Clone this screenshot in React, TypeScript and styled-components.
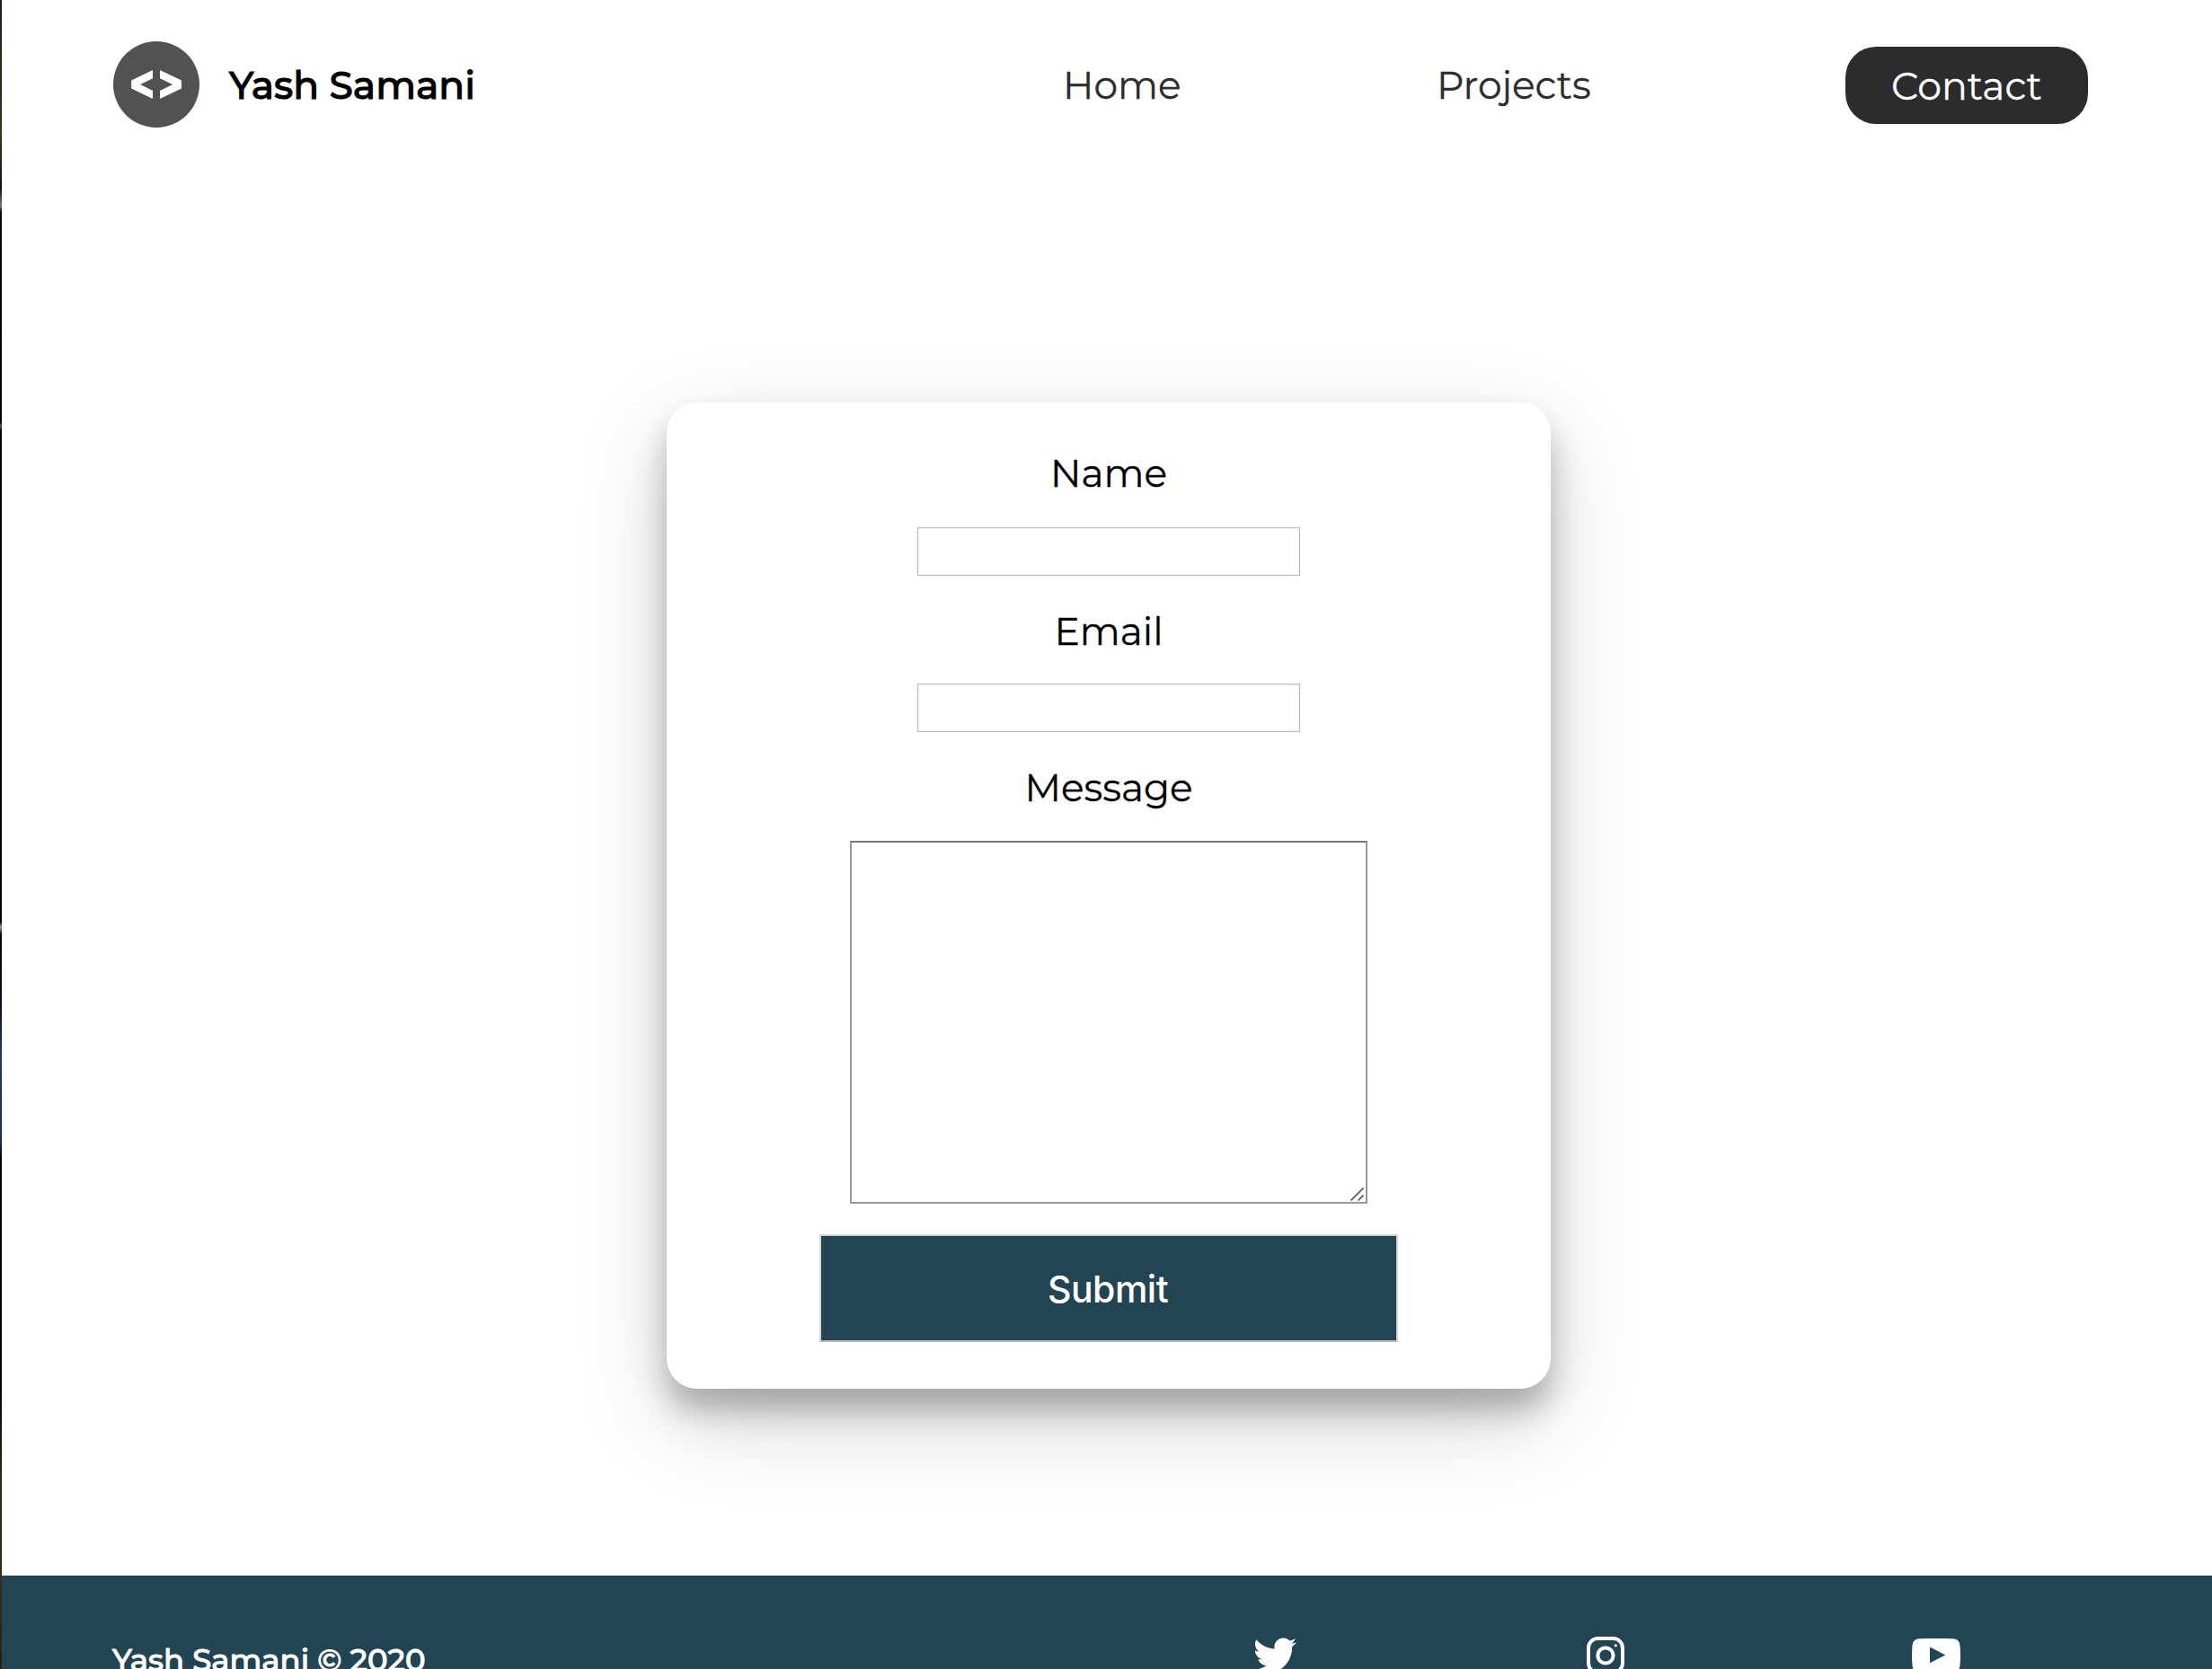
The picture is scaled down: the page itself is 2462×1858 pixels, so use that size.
import React from "react";
import styled, { createGlobalStyle } from "styled-components";
import { FaTwitter } from "react-icons/fa";

const GlobalStyle = createGlobalStyle`
  * { box-sizing: border-box; }
  body {
    margin: 0;
    background: #fff;
    font-family: Montserrat, Inter, "Liberation Sans", sans-serif;
    overflow: hidden;
  }
`;

const Window = styled.div`
  display: flex;
  height: 1858px;
  overflow: hidden;
`;

const DesktopEdge = styled.div`
  flex: 0 0 2px;
  background: linear-gradient(
    #1b2013 0, #30361f 150px, #10140c 210px, #777 229px, #080a08 236px,
    #000 470px, #555 474px, #000 480px, #000 1026px, #999 1032px, #05070a 1040px,
    #0a1020 1120px, #24365f 1170px, #1c2c52 1270px, #000 1290px,
    #060403 1540px, #33230f 1640px, #3a2a18 1760px, #2c1e0f 1858px
  );
`;

const Page = styled.div`
  flex: 1;
  min-width: 0;
  display: flex;
  flex-direction: column;
`;

const Header = styled.header`
  display: flex;
  flex-shrink: 0;
  align-items: center;
  height: 190px;
  padding: 0 138px 0 124px;
`;

const Brand = styled.a`
  display: flex;
  align-items: center;
  gap: 33px;
  margin-right: auto;
`;

const Word = styled.span<{ $size?: number; $track?: number; $weight?: number; $color?: string; $stroke?: number }>`
  font-size: ${(p) => p.$size ?? 42.4}px;
  line-height: 52px;
  letter-spacing: ${(p) => p.$track ?? 0}px;
  font-weight: ${(p) => p.$weight ?? 400};
  color: ${(p) => p.$color ?? "#000"};
  -webkit-text-stroke: ${(p) => p.$stroke ?? 0.3}px currentColor;
  white-space: nowrap;
`;

const Nav = styled.nav`
  display: flex;
  align-items: center;
`;

const NavLink = styled.a<{ $width: number }>`
  display: flex;
  width: ${(p) => p.$width}px;
`;

const ContactLink = styled.a`
  display: flex;
  align-items: center;
  justify-content: center;
  width: 270px;
  height: 86px;
  padding-top: 1px;
  border-radius: 34px;
  background: #2c2c2c;
`;

const Main = styled.main`
  flex: 0 0 1564px;
  padding: 258px 0 0 740px;
`;

const Card = styled.form`
  display: flex;
  flex-direction: column;
  align-items: center;
  width: 984px;
  height: 1098px;
  padding-top: 53px;
  border-radius: 34px;
  background: #fff;
  box-shadow: 0 24px 32px rgba(0, 0, 0, 0.24), 0 34px 100px rgba(0, 0, 0, 0.19);
`;

const Field = styled.label<{ $height: number; $gap: number }>`
  display: flex;
  flex-direction: column;
  align-items: center;
  justify-content: flex-start;
  gap: ${(p) => p.$gap}px;
  height: ${(p) => p.$height}px;
`;

const TextInput = styled.input`
  width: 426px;
  height: 54px;
  padding: 2px;
  border: 1px solid #bbb;
  box-shadow: inset 0 0 0 1px #f1f1f1;
  background: transparent;
  outline: none;
`;

const MessageBox = styled.div`
  display: flex;
  align-items: flex-end;
  justify-content: flex-end;
  width: 576px;
  height: 404px;
  padding: 0 2px 1px 0;
  border: 2px solid #999;
  border-top-color: #757575;
`;

const SubmitButton = styled.button`
  display: flex;
  align-items: center;
  justify-content: center;
  width: 644px;
  height: 120px;
  padding: 1px 2px 0 0;
  border: 2px solid #d3d3d3;
  border-bottom-color: #b9b9b9;
  background: #234453;
  font-family: Inter, "Liberation Sans", sans-serif;
`;

const Footer = styled.footer`
  display: flex;
  flex: 0 0 184px;
  padding: 0 124px 0 123px;
  background: #234453;
  color: #fff;
`;

const Copyright = styled.div`
  width: 1270px;
  padding-top: 68px;
`;

const Social = styled.div`
  display: flex;
  align-items: center;
  height: 48px;
  margin-top: 65px;
`;

const SocialLink = styled.a<{ $width: number }>`
  display: flex;
  width: ${(p) => p.$width}px;
`;

const LogoMark = styled.svg`
  display: block;
  margin-bottom: 2px;
`;

const Logo = () => (
  <LogoMark width="96" height="96" viewBox="0 0 96 96">
    <circle cx="48" cy="48" r="48" fill="#525252" />
    <path fill="#fff" d="M44 32v9.3L30.2 48 44 55v9L20.2 52.4v-9zM52 32v9.3L66.1 48 52 55v9l24-11.6v-9z" />
  </LogoMark>
);

const Instagram = () => (
  <svg width="42" height="42" viewBox="0 0 42 42">
    <rect x="2" y="2" width="38" height="38" rx="10.5" fill="none" stroke="#fff" strokeWidth="4" />
    <circle cx="21" cy="21" r="8.6" fill="none" stroke="#fff" strokeWidth="4" />
    <circle cx="32.3" cy="9.8" r="1.6" fill="#fff" />
  </svg>
);

const YouTube = () => (
  <svg width="54" height="38" viewBox="0 0 54 38">
    <path
      fill="#fff"
      fillRule="evenodd"
      d="M27 0C37 0 43 .1 47 .5C51.200 .9 53 3.600 53.500 8C54.150 15 54.150 23 53.500 30C53 34.400 51.200 37.100 47 37.500C43 37.900 37 38 27 38C17 38 11 37.900 7 37.500C2.800 37.100 1 34.400 .5 30C-.150 23-.150 15 .5 8C1 3.600 2.800 .9 7 .5C11 .1 17 0 27 0ZM20 9.500V27.300L37.200 18.400Z"
    />
  </svg>
);

const ResizeGrip = () => (
  <svg width="15" height="15" viewBox="0 0 15 15">
    <path d="M.5 14.500 14.500 .5M8.500 14.500 14.500 8.500" stroke="#555" strokeWidth="1.600" />
  </svg>
);

export default function App() {
  return (
    <>
      <GlobalStyle />
      <Window>
        <DesktopEdge />
        <Page>
          <Header>
            <Brand>
              <Logo />
              <Word $weight={500} $stroke={1}>Yash Samani</Word>
            </Brand>
            <Nav>
              <NavLink $width={416}><Word $color="#2c2c2c">Home</Word></NavLink>
              <NavLink $width={455}><Word $color="#2c2c2c">Projects</Word></NavLink>
              <ContactLink><Word $color="#fff" $size={42.6}>Contact</Word></ContactLink>
            </Nav>
          </Header>
          <Main>
            <Card>
              <Field $height={176} $gap={34}>
                <Word>Name</Word>
                <TextInput />
              </Field>
              <Field $height={174} $gap={32}>
                <Word>Email</Word>
                <TextInput />
              </Field>
              <Field $height={523} $gap={33}>
                <Word>Message</Word>
                <MessageBox><ResizeGrip /></MessageBox>
              </Field>
              <SubmitButton type="button">
                <Word $size={41} $weight={500} $color="#fff" $track={-0.5} $stroke={0}>Submit</Word>
              </SubmitButton>
            </Card>
          </Main>
          <Footer>
            <Copyright>
              <Word $size={33.9} $weight={500} $color="#fff" $stroke={0.9}>Yash Samani © 2020</Word>
            </Copyright>
            <Social>
              <SocialLink $width={371}><FaTwitter size={48} /></SocialLink>
              <SocialLink $width={362}><Instagram /></SocialLink>
              <SocialLink $width={54}><YouTube /></SocialLink>
            </Social>
          </Footer>
        </Page>
      </Window>
    </>
  );
}
